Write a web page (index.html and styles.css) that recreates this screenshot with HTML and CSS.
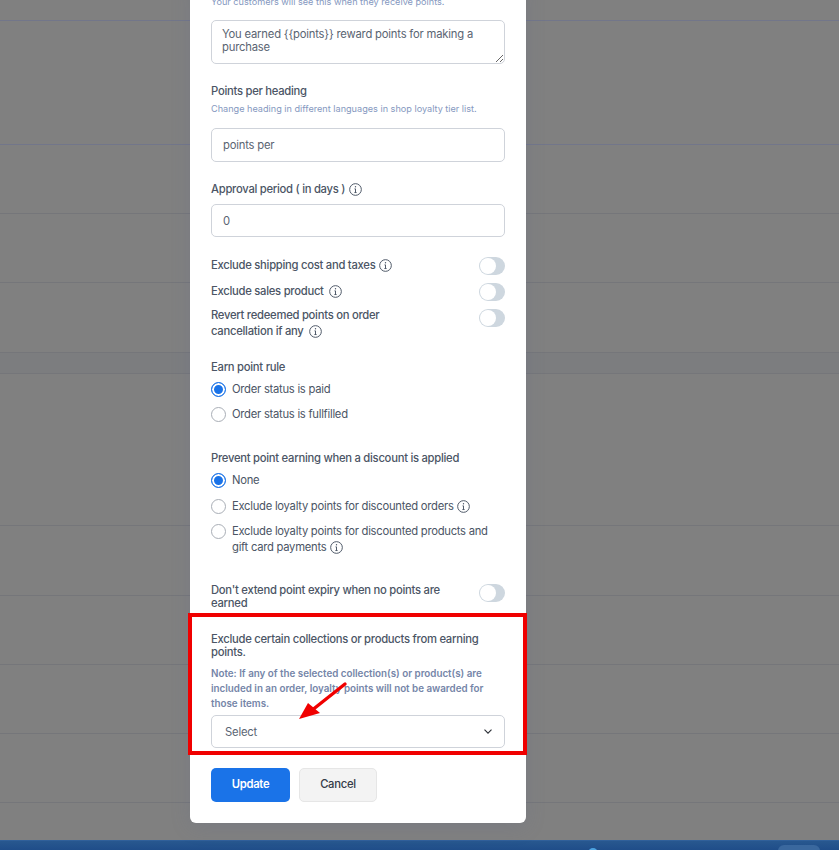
FILE: index.html
```html
<!DOCTYPE html>
<html lang="en">
<head>
    <meta charset="UTF-8">
    <meta name="viewport" content="width=device-width, initial-scale=1.0">
    <title>Loyalty points settings</title>
    <link rel="stylesheet" href="styles.css">
</head>
<body>
    <svg class="icon-defs" width="0" height="0">
        <symbol id="info" viewBox="0 0 12 12">
            <circle cx="6" cy="6" r="5.4" fill="none" stroke="currentColor" stroke-width="0.9"/>
            <path d="M6 5.4V8.8M5 8.8H7M5.1 5.4H6" fill="none" stroke="currentColor" stroke-width="0.9"/>
            <circle cx="6" cy="3.5" r="0.65" fill="currentColor"/>
        </symbol>
    </svg>

    <div class="page">
        <div class="rows">
            <div class="row row-first"></div>
            <div class="row row-tall"></div>
            <div class="row"></div>
            <div class="row"></div>
            <div class="row row-wide"></div>
            <div class="row row-head"></div>
            <div class="row row-taller"></div>
            <div class="row row-wide"></div>
            <div class="row"></div>
            <div class="row"></div>
            <div class="row"></div>
        </div>

        <div class="taskbar">
            <span class="tray-dot"></span>
            <span class="tray-pill"></span>
        </div>

        <div class="modal">
            <p class="hint hint-top">Your customers will see this when they receive points.</p>
            <textarea class="field field-area" readonly>You earned {{points}} reward points for making a purchase</textarea>

            <div class="label label-heading">Points per heading</div>
            <p class="hint hint-heading">Change heading in different languages in shop loyalty tier list.</p>
            <input class="field field-text" type="text" value="points per" readonly>

            <div class="label label-approval">Approval period ( in days ) <svg class="info"><use href="#info"/></svg></div>
            <input class="field field-number" type="text" value="0" readonly>

            <div class="toggles">
                <div class="toggle-row">
                    <span class="label label-row">Exclude shipping cost and taxes <svg class="info"><use href="#info"/></svg></span>
                    <span class="toggle"></span>
                </div>
                <div class="toggle-row">
                    <span class="label label-row">Exclude sales product <svg class="info info-gap"><use href="#info"/></svg></span>
                    <span class="toggle"></span>
                </div>
                <div class="toggle-row">
                    <span class="label label-wrap">Revert redeemed points on order cancellation if any <svg class="info info-gap"><use href="#info"/></svg></span>
                    <span class="toggle"></span>
                </div>
            </div>

            <div class="label label-earn">Earn point rule</div>
            <div class="radio radio-first"><span class="dot dot-on"></span><span>Order status is paid</span></div>
            <div class="radio"><span class="dot"></span><span>Order status is fullfilled</span></div>

            <div class="label label-prevent">Prevent point earning when a discount is applied</div>
            <div class="radio radio-first"><span class="dot dot-on"></span><span>None</span></div>
            <div class="radio radio-mid"><span class="dot"></span><span>Exclude loyalty points for discounted orders <svg class="info"><use href="#info"/></svg></span></div>
            <div class="radio"><span class="dot"></span><span>Exclude loyalty points for discounted products and gift card payments <svg class="info"><use href="#info"/></svg></span></div>

            <div class="toggle-row expiry-row">
                <span class="label label-tight">Don't extend point expiry when no points are earned</span>
                <span class="toggle"></span>
            </div>

            <div class="label label-tight label-collections">Exclude certain collections or products from earning points.</div>
            <p class="note">Note: If any of the selected collection(s) or product(s) are included in an order, loyalty points will not be awarded for those items.</p>
            <div class="select">
                <span>Select</span>
                <svg class="chevron" width="8" height="5" viewBox="0 0 8 5"><path d="M0.5 0.6L4 4.2L7.5 0.6" fill="none" stroke="#2b2f36" stroke-width="1.1"/></svg>
            </div>

            <div class="actions">
                <button class="btn btn-primary">Update</button>
                <button class="btn btn-cancel">Cancel</button>
            </div>
        </div>

        <!-- annotation drawn on top of the screenshot -->
        <div class="callout"></div>
        <svg class="arrow" width="60" height="50" viewBox="0 0 60 50">
            <path d="M50 4L16 31" stroke="#f00000" stroke-width="3.4" stroke-linecap="round"/>
            <path d="M4 39L13 23L25 33Z" fill="#f00000"/>
        </svg>
    </div>
</body>
</html>
```

FILE: styles.css
```css
* {
    box-sizing: border-box;
}
html, body {
    margin: 0;
    height: 100%;
}
body {
    font-family: Inter, "Liberation Sans", sans-serif;
    font-size: 11.25px;
    letter-spacing: -0.27px;
    color: #4b5565;
    background-color: #808080;
    overflow: hidden;
}
p {
    margin: 0;
}
.icon-defs {
    position: absolute;
}
.page {
    position: relative;
    height: 850px;
    overflow: hidden;
    display: flex;
    flex-direction: column;
}

/* dimmed table behind the modal */
.rows {
    flex: 1;
}
.row {
    height: 69px;
    border-bottom: 1px solid #75767a;
}
.row-first {
    height: 21px;
    border-bottom-color: #72768a;
}
.row-tall {
    height: 124px;
    border-bottom-color: #72768a;
}
.row-wide {
    height: 70px;
}
.row-head {
    height: 21px;
    background-color: #7c7d7f;
}
.row-taller {
    height: 152px;
}
.taskbar {
    position: relative;
    height: 10px;
    background: linear-gradient(#28588f, #1f4d89);
    border-top: 1px solid #30609a;
}
.tray-dot {
    position: absolute;
    left: 588px;
    top: 7px;
    width: 10px;
    height: 10px;
    border-radius: 50%;
    background-color: #4da3e0;
}
.tray-pill {
    position: absolute;
    left: 778px;
    top: 4px;
    width: 42px;
    height: 14px;
    border-radius: 6px;
    background-color: #3a689e;
}

/* modal */
.modal {
    position: absolute;
    left: 190px;
    top: -20px;
    width: 336px;
    height: 843px;
    padding: 0 21px;
    background-color: #fff;
    border-radius: 6px;
    box-shadow: 0 4px 20px rgba(90, 100, 140, 0.18);
}
.label {
    font-weight: 500;
    line-height: 14px;
}
.hint {
    font-size: 9.15px;
    letter-spacing: normal;
    line-height: 14px;
    color: #8598c0;
}
.hint-top {
    margin-top: 15px;
}
.field {
    display: block;
    width: 294px;
    padding: 0 11px;
    border: 1px solid #cfd3da;
    border-radius: 5px;
    font-family: inherit;
    font-size: 11.25px;
    letter-spacing: -0.2px;
    color: #5a6472;
    background-color: #fff;
    outline: none;
}
.field-area {
    height: 44px;
    margin-top: 11px;
    padding: 7px 10px;
    line-height: 13px;
}
.field-text {
    height: 34px;
    margin-top: 12px;
}
.field-number {
    height: 33px;
    margin-top: 8px;
}
.label-heading {
    margin-top: 20px;
}
.hint-heading {
    margin-top: 4px;
}
.label-approval {
    margin-top: 20px;
}
.info {
    width: 13px;
    height: 13px;
    margin-left: 1px;
    vertical-align: -3px;
    color: #4b5565;
}
.info-gap {
    margin-left: 3px;
}

/* toggles */
.toggles {
    margin-top: 20px;
}
.toggle-row {
    display: flex;
    justify-content: space-between;
    align-items: flex-start;
    min-height: 26px;
}
.toggle {
    position: relative;
    flex: none;
    width: 26px;
    height: 18px;
    border-radius: 9px;
    background-color: #ced7df;
}
.toggle::after {
    content: "";
    position: absolute;
    left: 1px;
    top: 1px;
    width: 16px;
    height: 16px;
    border-radius: 50%;
    background-color: #fff;
}
.label-row {
    padding-top: 1px;
}
.label-wrap {
    display: block;
    width: 190px;
    margin-top: -2px;
    line-height: 16px;
}
.label-earn {
    margin-top: 21px;
}

/* radios */
.radio {
    display: flex;
    gap: 6px;
    align-items: flex-start;
    margin-top: 9px;
    line-height: 16px;
    font-weight: 400;
}
.radio-first {
    margin-top: 7px;
}
.radio-mid {
    margin-top: 10px;
}
.dot {
    flex: none;
    width: 15px;
    height: 15px;
    margin-top: 1px;
    border: 1px solid #a9aeb6;
    border-radius: 50%;
    background-color: #fff;
}
.dot-on {
    border: 1px solid #1a73e8;
    background-color: #1a73e8;
    box-shadow: inset 0 0 0 2px #fff;
}
.label-prevent {
    margin-top: 29px;
}
.expiry-row {
    margin-top: 29px;
}
.label-tight {
    display: block;
    width: 250px;
    line-height: 13px;
}
.label-collections {
    width: 290px;
    margin-top: 23px;
}
.note {
    margin-top: 7px;
    font-size: 9.8px;
    letter-spacing: normal;
    font-weight: 600;
    line-height: 15px;
    color: #7585a8;
}
.select {
    display: flex;
    justify-content: space-between;
    align-items: center;
    height: 33px;
    margin-top: 4px;
    padding: 0 12px 0 13px;
    border: 1px solid #cfd3da;
    border-radius: 5px;
    letter-spacing: -0.2px;
    color: #5a6472;
}

/* buttons */
.actions {
    display: flex;
    gap: 9px;
    margin-top: 20px;
}
.btn {
    height: 34px;
    padding: 0 0 2px;
    border-radius: 5px;
    font-family: inherit;
    font-size: 11.25px;
    letter-spacing: -0.27px;
    font-weight: 600;
}
.btn-primary {
    width: 79px;
    border: none;
    color: #fff;
    background-color: #1a73e8;
}
.btn-cancel {
    width: 78px;
    border: 1px solid #e6e6e6;
    font-weight: 500;
    color: #333b48;
    background-color: #f3f3f3;
}

/* annotation */
.callout {
    position: absolute;
    left: 188px;
    top: 613px;
    width: 339px;
    height: 142px;
    border: 4px solid #f00000;
}
.arrow {
    position: absolute;
    left: 295px;
    top: 680px;
}
```
